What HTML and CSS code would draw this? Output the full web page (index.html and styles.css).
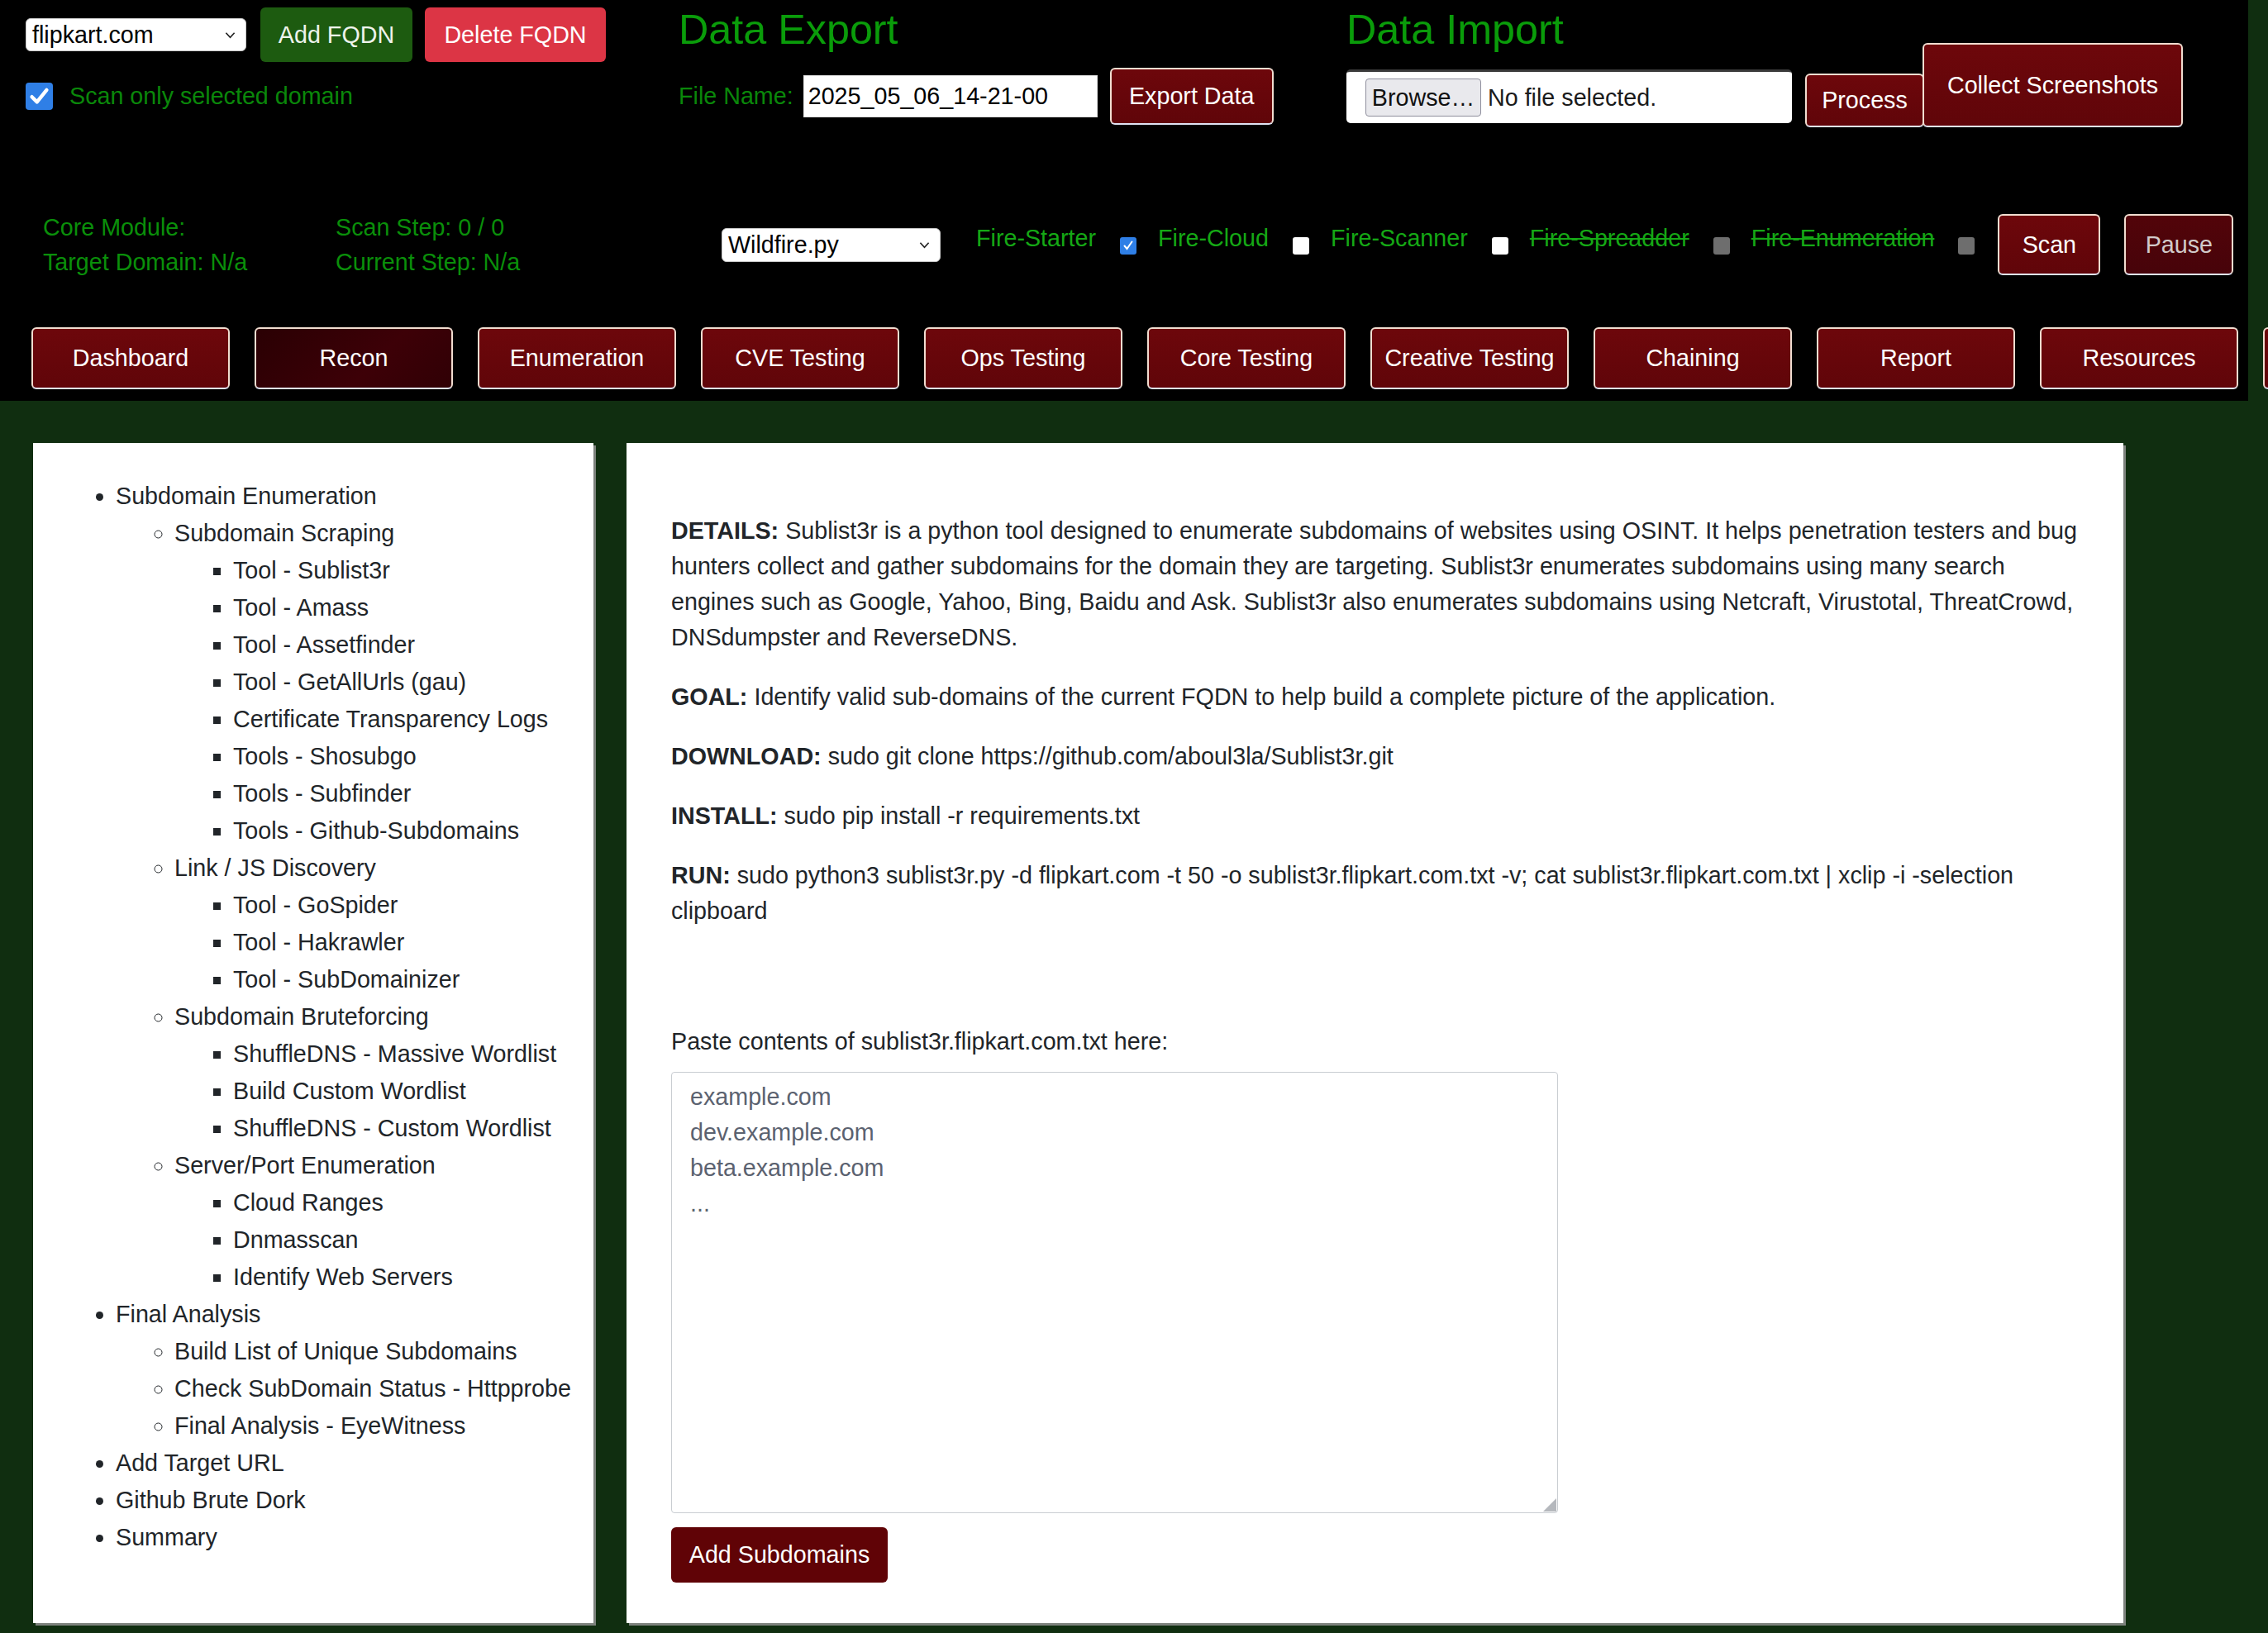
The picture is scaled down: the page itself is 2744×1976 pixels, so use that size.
FILE: index.html
```html
<!DOCTYPE html>
<html lang="en">
<head>
<meta charset="utf-8">
<title>Wildfire</title>
<link rel="stylesheet" href="styles.css">
</head>
<body>
<header class="topbar">
  <div class="row1">
    <div class="fqdn">
      <div class="fqdn-controls">
        <div class="select select-fqdn"><span>flipkart.com</span><svg class="chev" viewBox="0 0 14 9"><path d="M1.5 1.5 L7 7.5 L12.5 1.5"/></svg></div>
        <button class="btn btn-add">Add FQDN</button>
        <button class="btn btn-delete">Delete FQDN</button>
      </div>
      <label class="scan-only"><span class="check-big"><svg viewBox="0 0 24 24"><path d="M5.5 12.5 L10 17 L18.5 6.5"/></svg></span>Scan only selected domain</label>
    </div>
    <div class="export">
      <h2 class="section-title">Data Export</h2>
      <div class="export-row">
        <span class="field-label">File Name:</span>
        <input class="text-input" type="text" value="2025_05_06_14-21-00">
        <button class="btn btn-maroon btn-export">Export Data</button>
      </div>
    </div>
    <div class="import">
      <div class="import-main">
        <h2 class="section-title">Data Import</h2>
        <div class="import-row">
          <div class="file-box"><span class="browse">Browse…</span><span class="no-file">No file selected.</span></div>
          <button class="btn btn-maroon btn-process">Process</button>
        </div>
      </div>
      <button class="btn btn-maroon btn-collect">Collect Screenshots</button>
    </div>
  </div>

  <div class="row2">
    <div class="status">
      <span>Core Module:</span><span>Scan Step: 0 / 0</span>
      <span>Target Domain: N/a</span><span>Current Step: N/a</span>
    </div>
    <div class="select select-module"><span>Wildfire.py</span><svg class="chev" viewBox="0 0 14 9"><path d="M1.5 1.5 L7 7.5 L12.5 1.5"/></svg></div>
    <div class="fire-group">
      <span class="fire-label">Fire-Starter</span><span class="mini-check checked"><svg viewBox="0 0 20 20"><path d="M5.5 10.5 L8.5 14 L14.5 5.5"/></svg></span>
      <span class="fire-label">Fire-Cloud</span><span class="mini-check"></span>
      <span class="fire-label">Fire-Scanner</span><span class="mini-check"></span>
      <span class="fire-label struck">Fire-Spreadder</span><span class="mini-check disabled"></span>
      <span class="fire-label struck">Fire-Enumeration</span><span class="mini-check disabled last"></span>
    </div>
    <button class="btn btn-maroon btn-scan">Scan</button>
    <button class="btn btn-maroon btn-pause">Pause</button>
  </div>

  <nav class="tabs">
    <button class="btn btn-maroon tab">Dashboard</button>
    <button class="btn btn-maroon tab active">Recon</button>
    <button class="btn btn-maroon tab">Enumeration</button>
    <button class="btn btn-maroon tab">CVE Testing</button>
    <button class="btn btn-maroon tab">Ops Testing</button>
    <button class="btn btn-maroon tab">Core Testing</button>
    <button class="btn btn-maroon tab">Creative Testing</button>
    <button class="btn btn-maroon tab">Chaining</button>
    <button class="btn btn-maroon tab">Report</button>
    <button class="btn btn-maroon tab">Resources</button>
    <button class="btn btn-maroon tab" aria-label="More"></button>
  </nav>
</header>

<main class="content">
  <aside class="sidebar">
    <ul class="tree">
      <li>Subdomain Enumeration
        <ul>
          <li>Subdomain Scraping
            <ul>
              <li>Tool - Sublist3r</li>
              <li>Tool - Amass</li>
              <li>Tool - Assetfinder</li>
              <li>Tool - GetAllUrls (gau)</li>
              <li>Certificate Transparency Logs</li>
              <li>Tools - Shosubgo</li>
              <li>Tools - Subfinder</li>
              <li>Tools - Github-Subdomains</li>
            </ul>
          </li>
          <li>Link / JS Discovery
            <ul>
              <li>Tool - GoSpider</li>
              <li>Tool - Hakrawler</li>
              <li>Tool - SubDomainizer</li>
            </ul>
          </li>
          <li>Subdomain Bruteforcing
            <ul>
              <li>ShuffleDNS - Massive Wordlist</li>
              <li>Build Custom Wordlist</li>
              <li>ShuffleDNS - Custom Wordlist</li>
            </ul>
          </li>
          <li>Server/Port Enumeration
            <ul>
              <li>Cloud Ranges</li>
              <li>Dnmasscan</li>
              <li>Identify Web Servers</li>
            </ul>
          </li>
        </ul>
      </li>
      <li>Final Analysis
        <ul>
          <li>Build List of Unique Subdomains</li>
          <li>Check SubDomain Status - Httpprobe</li>
          <li>Final Analysis - EyeWitness</li>
        </ul>
      </li>
      <li>Add Target URL</li>
      <li>Github Brute Dork</li>
      <li>Summary</li>
    </ul>
  </aside>

  <section class="detail">
    <p><b>DETAILS:</b> Sublist3r is a python tool designed to enumerate subdomains of websites using OSINT. It helps penetration testers and bug hunters collect and gather subdomains for the domain they are targeting. Sublist3r enumerates subdomains using many search engines such as Google, Yahoo, Bing, Baidu and Ask. Sublist3r also enumerates subdomains using Netcraft, Virustotal, ThreatCrowd, DNSdumpster and ReverseDNS.</p>
    <p><b>GOAL:</b> Identify valid sub-domains of the current FQDN to help build a complete picture of the application.</p>
    <p><b>DOWNLOAD:</b> sudo git clone https://github.com/aboul3la/Sublist3r.git</p>
    <p><b>INSTALL:</b> sudo pip install -r requirements.txt</p>
    <p><b>RUN:</b> sudo python3 sublist3r.py -d flipkart.com -t 50 -o sublist3r.flipkart.com.txt -v; cat sublist3r.flipkart.com.txt | xclip -i -selection clipboard</p>
    <div class="paste-block">
      <label class="paste-label" for="subs">Paste contents of sublist3r.flipkart.com.txt here:</label>
      <div class="paste-wrap">
        <textarea id="subs" class="paste-area" placeholder="example.com&#10;dev.example.com&#10;beta.example.com&#10;..."></textarea>
        <span class="grip"></span>
      </div>
      <button class="btn btn-maroon btn-addsubs">Add Subdomains</button>
    </div>
  </section>
</main>
</body>
</html>
```

FILE: styles.css
```css
* { box-sizing: border-box; }

html, body {
  margin: 0;
  padding: 0;
  overflow: hidden;
}

body {
  width: 2744px;
  height: 1976px;
  background: #102e10;
  font-family: "Liberation Sans", Arial, sans-serif;
  font-size: 28.7px;
  color: #212529;
}

/* ---------- header ---------- */
.topbar {
  width: 2720px;
  background: #000;
  padding-bottom: 14px;
}

.row1 {
  display: flex;
  align-items: flex-start;
  padding-left: 31px;
}

.fqdn {
  flex: none;
  width: 790px;
  padding-top: 9px;
}

.fqdn-controls {
  display: flex;
  align-items: center;
}

.select {
  display: flex;
  align-items: center;
  justify-content: space-between;
  background: #fff;
  color: #000;
  border: 1px solid #c8c8c8;
  border-radius: 6px;
  padding: 0 12px 0 7px;
  font-size: 28.7px;
}

.chev {
  width: 13px;
  height: 9px;
  fill: none;
  stroke: #222;
  stroke-width: 1.8;
}

.select-fqdn {
  width: 267px;
  height: 40px;
  margin-right: 17px;
}

.btn {
  font-family: "Liberation Sans", Arial, sans-serif;
  font-size: 28.7px;
  color: #fff;
  border: none;
  border-radius: 6px;
  padding: 0;
  flex: none;
}

.btn-add {
  width: 184px;
  height: 66px;
  margin-right: 15px;
  background: #1d5b10;
  color: #eef3ec;
}

.btn-delete {
  width: 219px;
  height: 66px;
  background: #dc3545;
}

.scan-only {
  display: flex;
  align-items: center;
  margin-top: 25px;
  color: #0a870a;
}

.check-big {
  width: 33px;
  height: 33px;
  margin-right: 20px;
  background: #2f7fe6;
  border-radius: 4px;
  display: flex;
}

.check-big svg {
  width: 33px;
  height: 33px;
  fill: none;
  stroke: #fff;
  stroke-width: 3.2;
  stroke-linecap: round;
  stroke-linejoin: round;
}

.btn-maroon {
  background: linear-gradient(180deg, #6d070b 0%, #600509 100%);
  border: 2px solid #f1ddd0;
  border-bottom-color: #dfe3f3;
}

.section-title {
  margin: 8px 0 0;
  font-size: 50.3px;
  line-height: 56px;
  font-weight: normal;
  color: #0a9c0a;
}

.export {
  flex: none;
  width: 808px;
}

.export-row {
  display: flex;
  align-items: center;
  margin-top: 18px;
}

.field-label {
  color: #0a870a;
  margin-right: 12px;
}

.text-input {
  width: 356px;
  height: 51px;
  margin-right: 15px;
  border: 1px solid #ddd;
  background: #fff;
  color: #000;
  font-family: "Liberation Sans", Arial, sans-serif;
  font-size: 28.7px;
  padding: 0 5px;
  outline: none;
}

.btn-export {
  width: 198px;
  height: 69px;
}

.import {
  display: flex;
  align-items: flex-end;
}

.import-row {
  display: flex;
  align-items: flex-end;
  margin-top: 20px;
}

.file-box {
  width: 539px;
  height: 65px;
  margin-bottom: 5px;
  display: flex;
  align-items: center;
  padding-left: 23px;
  background: #fff;
  border-radius: 5px;
  border-top: 3px solid #3a3a3a;
  color: #1b1b1b;
}

.browse {
  width: 140px;
  height: 46px;
  margin-right: 8px;
  display: flex;
  align-items: center;
  justify-content: center;
  background: #e9e9ed;
  border: 1px solid #8f8f9d;
  border-radius: 4px;
  color: #111;
}

.btn-process {
  width: 144px;
  height: 65px;
  margin-left: 16px;
}

.btn-collect {
  width: 315px;
  height: 102px;
  margin-left: -2px;
}

/* row 2 */
.row2 {
  display: flex;
  align-items: center;
  margin-top: 105px;
  height: 74px;
  padding-left: 52px;
}

.status {
  flex: none;
  width: 821px;
  display: grid;
  grid-template-columns: 354px auto;
  line-height: 42px;
  color: #0a8f0a;
}

.select-module {
  width: 265px;
  height: 41px;
  flex: none;
}

.fire-group {
  display: flex;
  align-items: center;
  margin-left: 43px;
}

.fire-label {
  color: #15a815;
  padding-bottom: 16px;
  white-space: nowrap;
}

.fire-label.struck {
  text-decoration: line-through;
}

.mini-check {
  width: 20px;
  height: 21px;
  margin: 3px 26px 0 29px;
  background: #fff;
  border-radius: 3px;
  display: flex;
}

.mini-check.checked {
  background: #2f7fe6;
}

.mini-check svg {
  width: 20px;
  height: 20px;
  fill: none;
  stroke: #fff;
  stroke-width: 2;
  stroke-linecap: round;
}

.mini-check.disabled {
  background: #6e6e6e;
}

.mini-check.last {
  margin-right: 28px;
}

.btn-scan {
  width: 124px;
  height: 74px;
}

.btn-pause {
  width: 132px;
  height: 74px;
  margin-left: 29px;
  background: linear-gradient(180deg, #520409 0%, #47030a 100%);
  color: #d2caca;
}

/* tabs */
.tabs {
  display: flex;
  gap: 30px;
  margin-top: 63px;
  padding-left: 38px;
}

.tab {
  width: 240px;
  height: 75px;
}

.tab.active {
  background: linear-gradient(135deg, #2a0003 0%, #3d0007 60%, #300005 100%);
}

/* ---------- main ---------- */
.content {
  display: flex;
  align-items: stretch;
  gap: 40px;
  padding: 51px 0 0 40px;
}

.sidebar {
  flex: none;
  width: 678px;
  background: #fff;
  padding: 14px 8px 0 30px;
  box-shadow: 3px 3px 0 #7d827d;
}

.tree {
  margin: 28px 0;
  padding-left: 70px;
  line-height: 45px;
  list-style: disc;
  white-space: nowrap;
}

.tree ul {
  margin: 0;
  padding-left: 71px;
  list-style: circle;
}

.tree ul ul {
  list-style: square;
}

.detail {
  flex: none;
  width: 1811px;
  background: #fff;
  padding: 56px 54px 49px;
  box-shadow: 3px 3px 0 #7d827d;
  line-height: 43px;
}

.detail p {
  margin: 29px 0;
}

.paste-block {
  margin-top: 115px;
}

.paste-label {
  display: block;
  margin-bottom: 15px;
}

.paste-wrap {
  position: relative;
  width: 1073px;
}

.paste-area {
  display: block;
  width: 1073px;
  height: 534px;
  border: 1px solid #c9cdd2;
  border-radius: 4px;
  padding: 8px 22px;
  font-family: "Liberation Sans", Arial, sans-serif;
  font-size: 28.7px;
  line-height: 43px;
  color: #212529;
  resize: none;
}

.paste-area::placeholder {
  color: #5b6270;
}

.grip {
  position: absolute;
  right: 2px;
  bottom: 2px;
  width: 0;
  height: 0;
  border-left: 16px solid transparent;
  border-bottom: 16px solid #b5b8bd;
}

.btn-addsubs {
  display: block;
  margin-top: 17px;
  width: 262px;
  height: 67px;
  border: none;
  background: #600306;
}
```
